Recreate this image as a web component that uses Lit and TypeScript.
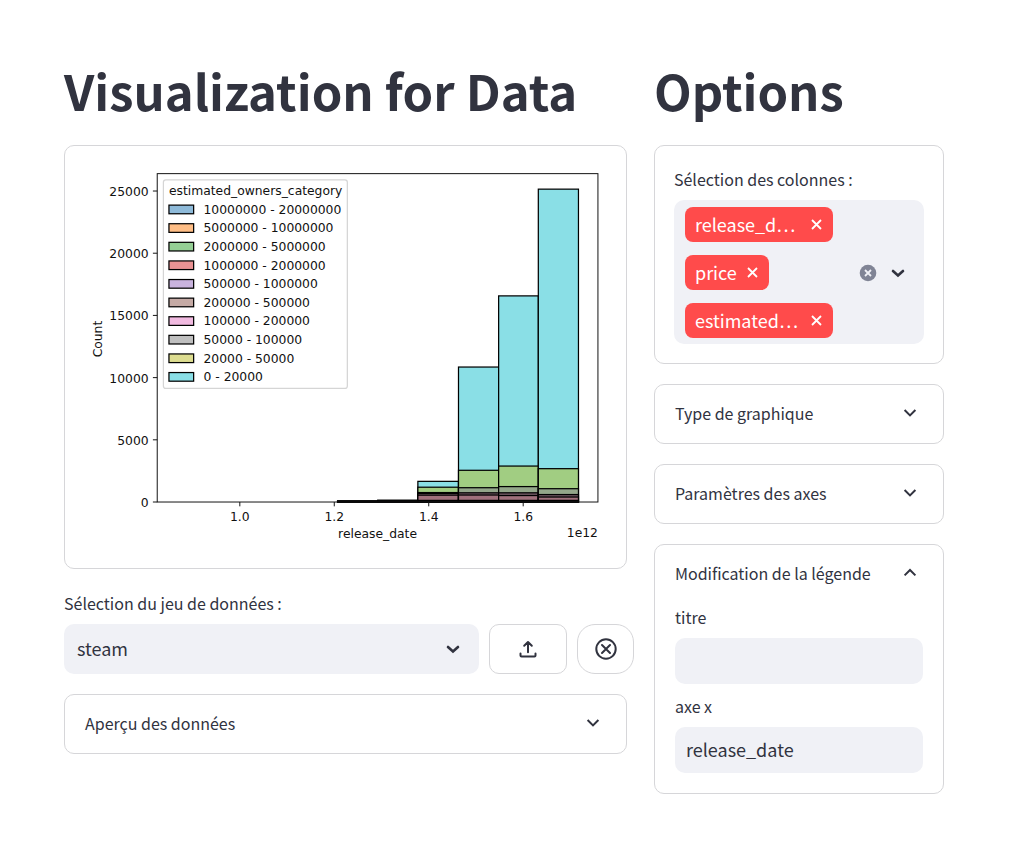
import { LitElement, html, svg, css } from "lit";
import { customElement, property, state } from "lit/decorators.js";

const chevronDown = html`<svg class="chevron" viewBox="0 0 24 24" aria-hidden="true">
  <path d="M6.6 8 12 13.4 17.4 8" />
</svg>`;
const chevronUp = html`<svg class="chevron" viewBox="0 0 24 24" aria-hidden="true">
  <path d="M6.6 13.4 12 8l5.4 5.4" />
</svg>`;
const caret = html`<svg class="caret" viewBox="0 0 24 24" aria-hidden="true">
  <path d="M7 10l5 4.5 5-4.5" />
</svg>`;

/** One stacked bar: its bins on the date axis and the cumulative counts, tallest first. */
interface Stack {
  from: number;
  to: number;
  tops: { count: number; fill: string }[];
}

const fills = ["#8adfe6", "#a1cd82", "#93a68a", "#6d5560", "#a0707c", "#111111"];
const stack = (from: number, to: number, counts: number[]): Stack => ({
  from,
  to,
  tops: counts.map((count, i) => ({ count, fill: fills[i] })),
});

const stacks: Stack[] = [
  stack(1.207, 1.292, [100, 70, 50, 30]),
  stack(1.292, 1.377, [150, 100, 70, 40]),
  stack(1.377, 1.463, [1660, 1190, 760, 690, 550, 130]),
  stack(1.463, 1.548, [10850, 2550, 1150, 740, 560, 130]),
  stack(1.548, 1.632, [16570, 2890, 1240, 740, 520, 130]),
  stack(1.632, 1.717, [25150, 2680, 1070, 600, 400, 130]),
];

const legend: [string, string][] = [
  ["10000000 - 20000000", "#8ebad9"],
  ["5000000 - 10000000", "#ffbe86"],
  ["2000000 - 5000000", "#95cf95"],
  ["1000000 - 2000000", "#ea9293"],
  ["500000 - 1000000", "#c9b3de"],
  ["200000 - 500000", "#c5aaa5"],
  ["100000 - 200000", "#f1bae0"],
  ["50000 - 100000", "#bfbfbf"],
  ["20000 - 50000", "#dddd90"],
  ["0 - 20000", "#8adfe6"],
];

@customElement("data-histogram")
export class DataHistogram extends LitElement {
  static styles = css`
    :host {
      display: block;
    }
    .plot {
      display: block;
      width: 100%;
      height: auto;
      font-family: "DejaVu Sans", sans-serif;
      font-size: 10px;
      fill: #111;
    }
    .frame {
      fill: none;
      stroke: #111;
      stroke-width: 0.8;
    }
    .tick {
      stroke: #111;
      stroke-width: 0.8;
    }
    .bar,
    .swatch {
      stroke: #000;
      stroke-width: 1;
    }
    .legend {
      fill: #fff;
      stroke: #d5d5d5;
    }
    .end {
      text-anchor: end;
    }
    .middle {
      text-anchor: middle;
    }
  `;

  private x = (v: number) => 125.4 + (v - 1) * 382.6;
  private y = (n: number) => 273 - n * 0.010077;

  render() {
    return html`<svg class="plot" viewBox="0 0 422 311" role="img" aria-label="release_date histogram">
      ${stacks.map((s) =>
        s.tops.map(
          (t) => svg`<rect class="bar" fill=${t.fill} x=${this.x(s.from)} y=${this.y(t.count)}
            width=${this.x(s.to) - this.x(s.from)} height=${273 - this.y(t.count)} />`
        )
      )}
      <rect class="frame" x="58.5" y="7" width="357" height="266" />
      ${[0, 5000, 10000, 15000, 20000, 25000].map(
        (n) => svg`<line class="tick" x1="55" x2="58.5" y1=${this.y(n)} y2=${this.y(n)} />
          <text class="end" x="51.5" y=${this.y(n) + 4}>${n}</text>`
      )}
      ${[1, 1.2, 1.4, 1.6].map(
        (v) => svg`<line class="tick" y1="273" y2="276.5" x1=${this.x(v)} x2=${this.x(v)} />
          <text class="middle" x=${this.x(v)} y="288">${v.toFixed(1)}</text>`
      )}
      <text class="middle" x="237" y="302">release_date</text>
      <text class="end" x="415.5" y="301">1e12</text>
      <text class="middle" transform="translate(14 141) rotate(-90)">Count</text>
      <rect class="legend" x="63.5" y="12" width="149" height="169" rx="2" />
      <text x="68" y="24">estimated_owners_category</text>
      ${legend.map(
        ([name, fill], i) => svg`<rect class="swatch" fill=${fill} x="68" y=${32.5 + i * 15.07} width="20" height="7" />
          <text x="96" y=${39.5 + i * 15.07}>${name}</text>`
      )}
    </svg>`;
  }
}

const shared = css`
  :host {
    display: block;
  }
  .chevron {
    width: 24px;
    height: 24px;
    flex: none;
    fill: none;
    stroke: #31333f;
    stroke-width: 2;
  }
  .caret {
    width: 24px;
    height: 24px;
    flex: none;
    fill: none;
    stroke: #31333f;
    stroke-width: 2.6;
    stroke-linecap: round;
  }
`;

@customElement("fold-panel")
export class FoldPanel extends LitElement {
  @property() heading = "";
  @property({ type: Boolean }) open = false;

  static styles = [
    shared,
    css`
      .panel {
        border: 1px solid #d6d6d9;
        border-radius: 10px;
      }
      .head {
        display: flex;
        align-items: center;
        justify-content: space-between;
        height: 58px;
        padding: 0 21px 0 20px;
        cursor: pointer;
        list-style: none;
      }
      .head::-webkit-details-marker {
        display: none;
      }
      .caption {
        padding-bottom: 2px;
      }
      .body {
        padding: 0 20px 20px;
      }
    `,
  ];

  private onToggle(e: Event) {
    this.open = (e.target as HTMLDetailsElement).open;
  }

  render() {
    return html`<details class="panel" ?open=${this.open} @toggle=${this.onToggle}>
      <summary class="head"><span class="caption">${this.heading}</span>${this.open ? chevronUp : chevronDown}</summary>
      <div class="body"><slot></slot></div>
    </details>`;
  }
}

@customElement("app-root")
export class AppRoot extends LitElement {
  @state() private columns = ["release_d…", "price", "estimated…"];

  static styles = [
    shared,
    css`
      :host {
        --field: #f0f1f6;
        box-sizing: border-box;
        min-height: 100vh;
        padding: 57px 71px 57px 64px;
        background: #fff;
        color: #31333f;
        font: 16px/22px "Noto Sans CJK KR", "Noto Sans", sans-serif;
      }
      .layout {
        display: grid;
        grid-template-columns: 33fr 17fr;
        gap: 27px;
        align-items: start;
      }
      .column {
        display: flex;
        flex-direction: column;
        gap: 20px;
        min-width: 0;
      }
      .title {
        margin: 0;
        padding-bottom: 2px;
        font-size: 49px;
        line-height: 66px;
        font-weight: 700;
        white-space: nowrap;
      }
      .card {
        padding: 19px 20px;
        border: 1px solid #d6d6d9;
        border-radius: 10px;
      }
      .columns-card {
        padding: 22px 19px 19px;
      }
      .label {
        display: block;
        padding-bottom: 10px;
      }
      .dataset {
        margin: 3px -7px 0 0;
      }
      .row {
        display: grid;
        grid-template-columns: 1fr 78px 57px;
        gap: 10px;
      }
      .select {
        display: grid;
        align-items: center;
      }
      .select > * {
        grid-area: 1 / 1;
      }
      .select .caret {
        justify-self: end;
        margin-right: 14px;
        pointer-events: none;
      }
      .control {
        box-sizing: border-box;
        width: 100%;
        margin: 0;
        border: 0;
        border-radius: 10px;
        background: var(--field);
        color: inherit;
        font: inherit;
        font-size: 18px;
        appearance: none;
      }
      .drop {
        height: 50px;
        padding: 0 13px 2px;
      }
      .text {
        height: 46px;
        padding: 0 11px 2px;
      }
      .action {
        display: grid;
        place-items: center;
        height: 50px;
        padding: 1px 0 0 1px;
        border: 1px solid #d6d6d9;
        border-radius: 10px;
        background: #fff;
      }
      .round {
        border-radius: 18px;
      }
      .glyph {
        width: 24px;
        height: 24px;
        fill: none;
        stroke: #31333f;
        stroke-width: 2;
        stroke-linecap: round;
        stroke-linejoin: round;
      }
      .multi {
        display: flex;
        align-items: center;
        justify-content: space-between;
        padding: 7px 14px 6px 11px;
        border-radius: 10px;
        background: var(--field);
      }
      .tags {
        display: flex;
        flex-direction: column;
        align-items: flex-start;
        gap: 13px;
        min-height: 131px;
        margin: 0;
        padding: 0;
        list-style: none;
      }
      .tag {
        display: flex;
        align-items: center;
        justify-content: space-between;
        box-sizing: border-box;
        height: 35px;
        padding: 0 10px;
        border-radius: 8px;
        background: #ff4b4b;
        color: #fff;
        font-size: 18px;
        gap: 9px;
      }
      .name {
        padding-bottom: 2px;
      }
      .clipped {
        width: 148px;
      }
      .bare {
        display: grid;
        padding: 0;
        border: 0;
        background: none;
      }
      .cross {
        width: 13px;
        height: 13px;
        fill: none;
        stroke: #fff;
        stroke-width: 1.8;
      }
      .tools {
        display: flex;
        align-items: center;
        gap: 9px;
      }
      .clear {
        width: 18px;
        height: 18px;
        fill: #808495;
      }
      .clear-mark {
        stroke: #f0f1f6;
        stroke-width: 1.8;
      }
      .fields {
        display: grid;
        gap: 11px;
        padding-top: 3px;
      }
      .field-group {
        display: grid;
      }
    `,
  ];

  private remove(name: string) {
    this.columns = this.columns.filter((c) => c !== name);
  }

  render() {
    return html`<main class="layout">
      <section class="column">
        <h1 class="title">Visualization for Data</h1>
        <div class="card"><data-histogram></data-histogram></div>
        <div class="dataset">
          <label class="label" for="dataset">Sélection du jeu de données :</label>
          <div class="row">
            <div class="select">
              <select class="control drop" id="dataset"><option>steam</option></select>
              ${caret}
            </div>
            <button class="action" aria-label="Importer">
              <svg class="glyph" viewBox="0 0 24 24">
                <path d="M12 15.2V5.5M8.2 8.8 12 5l3.8 3.8M4.5 16.5v2q0 1 1 1h13q1 0 1-1v-2" />
              </svg>
            </button>
            <button class="action round" aria-label="Supprimer">
              <svg class="glyph" viewBox="0 0 24 24">
                <circle cx="12" cy="12" r="9.7" />
                <path d="M8 8l8 8M16 8l-8 8" />
              </svg>
            </button>
          </div>
        </div>
        <fold-panel heading="Aperçu des données"></fold-panel>
      </section>
      <section class="column">
        <h1 class="title">Options</h1>
        <div class="card columns-card">
          <span class="label" id="columns-label">Sélection des colonnes :</span>
          <div class="multi" role="group" aria-labelledby="columns-label">
            <ul class="tags">
              ${this.columns.map(
                (name) => html`<li class="tag ${name.endsWith("…") ? "clipped" : ""}">
                  <span class="name">${name}</span>
                  <button class="bare" aria-label="Retirer" @click=${() => this.remove(name)}>
                    <svg class="cross" viewBox="0 0 13 13"><path d="M2 2l9 9M11 2l-9 9" /></svg>
                  </button>
                </li>`
              )}
            </ul>
            <div class="tools">
              <button class="bare" aria-label="Tout effacer" @click=${() => (this.columns = [])}>
                <svg class="clear" viewBox="0 0 18 18">
                  <circle cx="9" cy="9" r="8.3" />
                  <path class="clear-mark" d="M6 6l6 6M12 6l-6 6" />
                </svg>
              </button>
              <button class="bare" aria-label="Ouvrir">${caret}</button>
            </div>
          </div>
        </div>
        <fold-panel heading="Type de graphique"></fold-panel>
        <fold-panel heading="Paramètres des axes"></fold-panel>
        <fold-panel heading="Modification de la légende" open>
          <div class="fields">
            <div class="field-group">
              <label class="label" for="legend-title">titre</label>
              <input class="control text" id="legend-title" type="text" />
            </div>
            <div class="field-group">
              <label class="label" for="axis-x">axe x</label>
              <input class="control text" id="axis-x" type="text" value="release_date" />
            </div>
          </div>
        </fold-panel>
      </section>
    </main>`;
  }
}
